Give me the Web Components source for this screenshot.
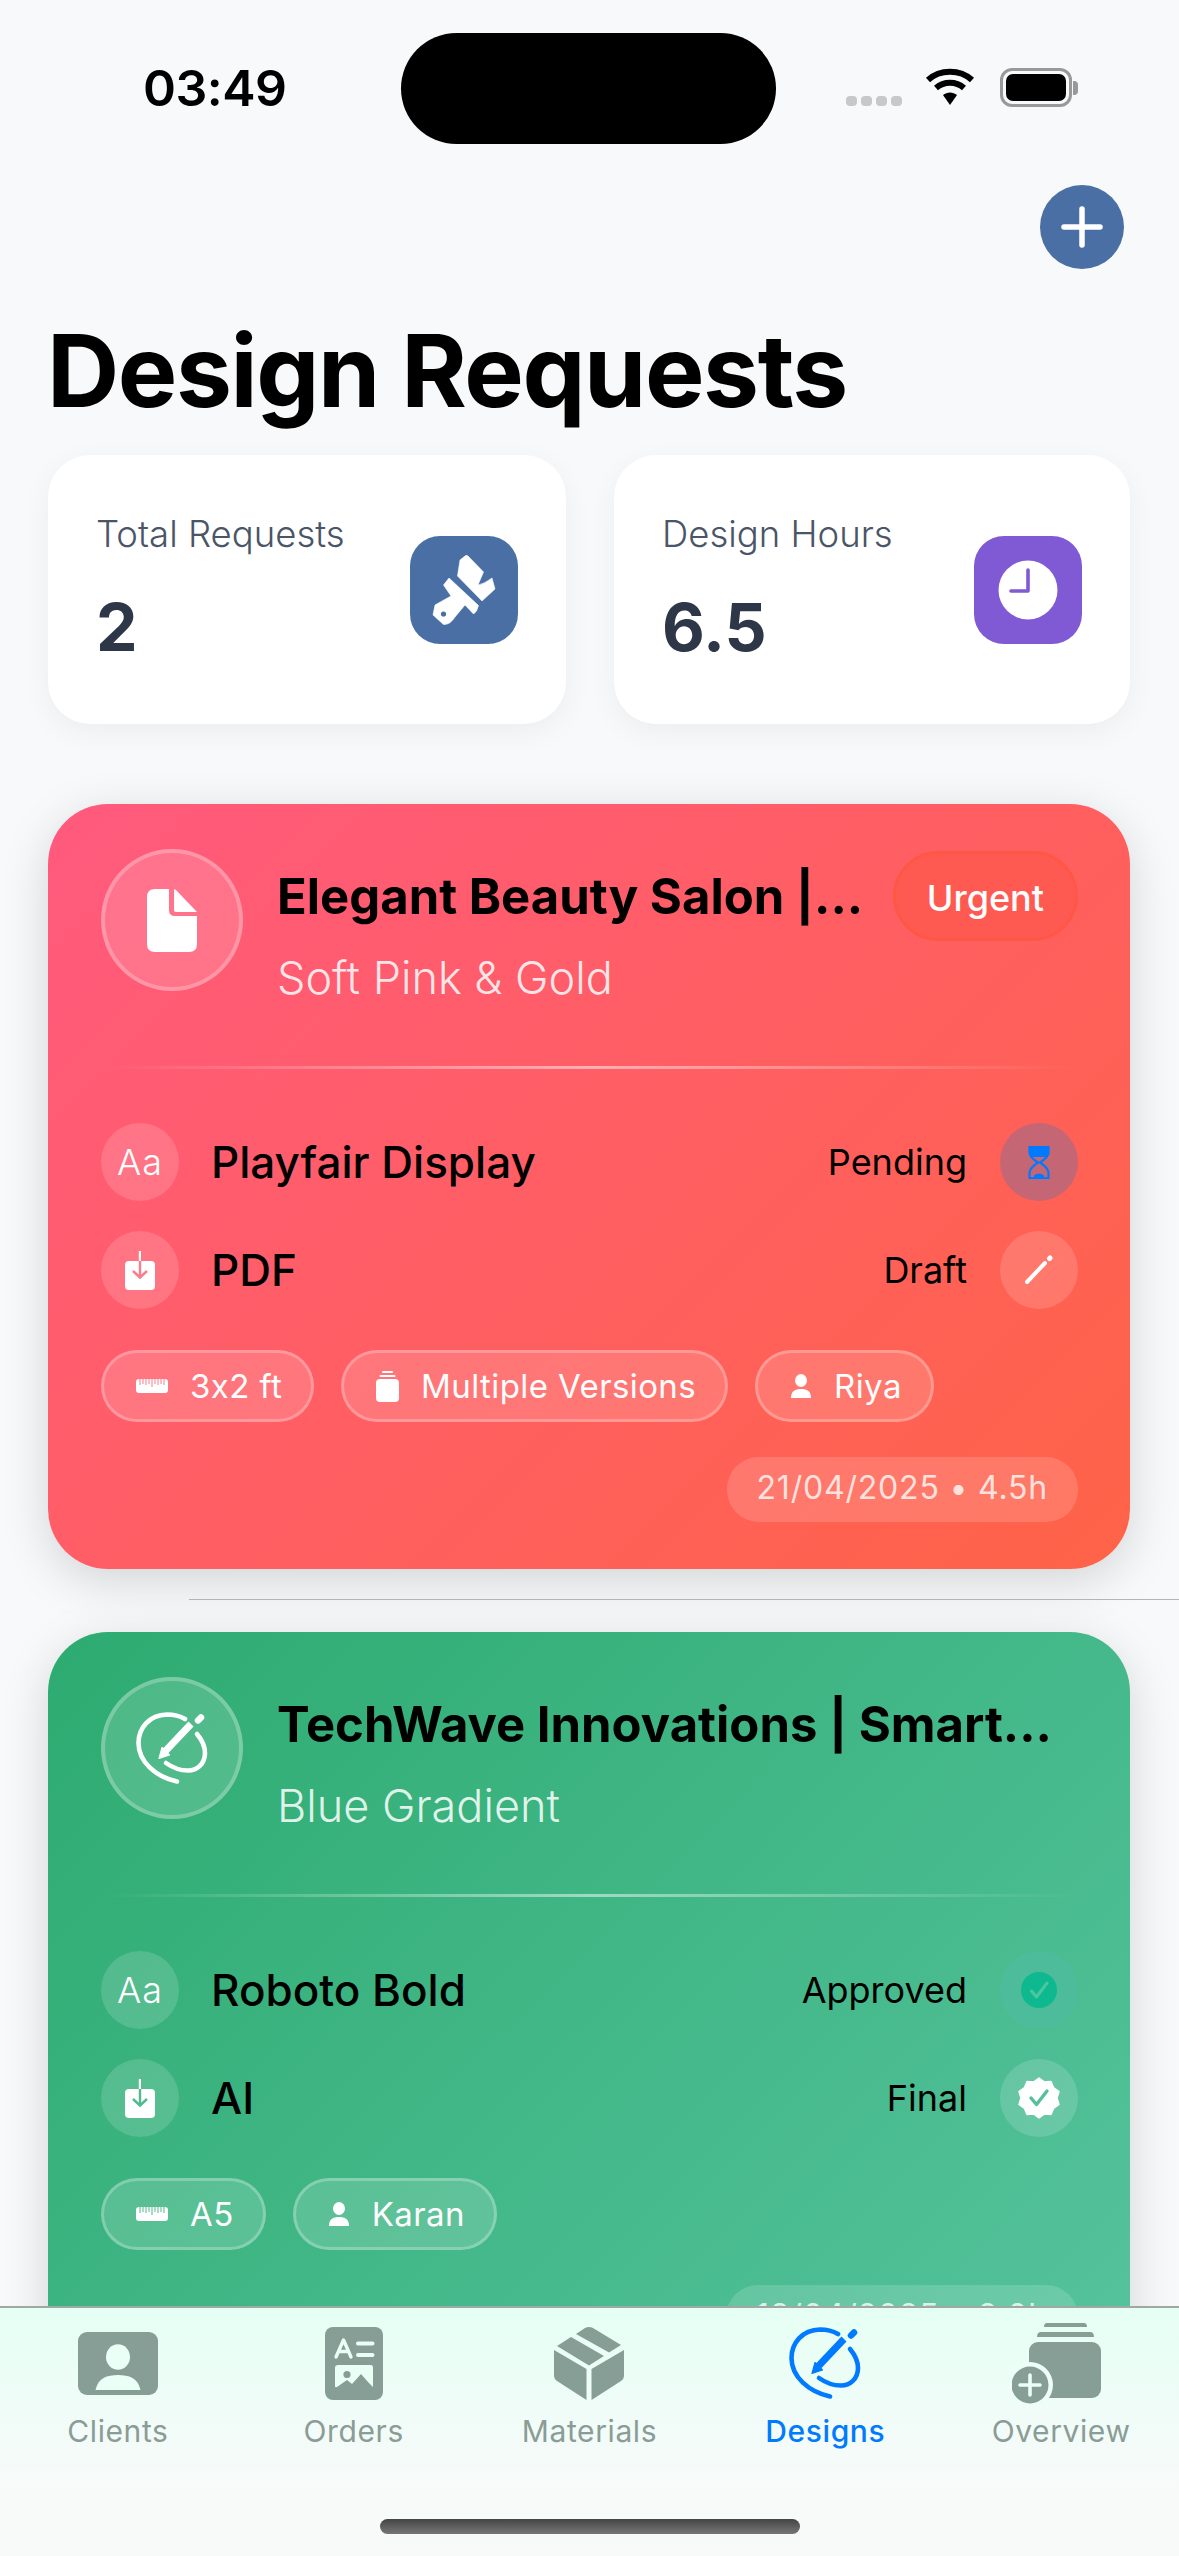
<!DOCTYPE html>
<html lang="en">
<head>
<meta charset="utf-8">
<title>Design Requests</title>
<style>
  html, body { margin: 0; padding: 0; background: #f8f9fa; }
  body { font-family: Inter, "Liberation Sans", sans-serif; }
</style>
</head>
<body>
<app-shell>
  <status-bar time="03:49"></status-bar>
  <page-header heading="Design Requests"></page-header>
  <stat-row>
    <stat-card label="Total Requests" value="2" icon="tools" tone="#4a6fa5"></stat-card>
    <stat-card label="Design Hours" value="6.5" icon="clock" tone="#805ad5"></stat-card>
  </stat-row>
  <request-list>
    <design-card heading="Elegant Beauty Salon |..." sub="Soft Pink &amp; Gold" icon="document" badge="Urgent"
      date="21/04/2025 • 4.5h" from="#ff5a7e" to="#ff6347" cut="#ff7a8c">
      <info-row lead="Aa" status="Pending" status-icon="pending">Playfair Display</info-row>
      <info-row lead-icon="download" status="Draft" status-icon="pencil">PDF</info-row>
      <chip-tag slot="chips" icon="ruler">3x2 ft</chip-tag>
      <chip-tag slot="chips" icon="albums">Multiple Versions</chip-tag>
      <chip-tag slot="chips" icon="person">Riya</chip-tag>
    </design-card>
    <list-sep></list-sep>
    <design-card heading="TechWave Innovations | Smart..." sub="Blue Gradient" icon="penCircle"
      date="18/04/2025 • 2.0h" from="#2dab70" to="#56c39e" cut="#4fbb8f">
      <info-row lead="Aa" status="Approved" status-icon="approved">Roboto Bold</info-row>
      <info-row lead-icon="download" status="Final" status-icon="seal">AI</info-row>
      <chip-tag slot="chips" icon="ruler">A5</chip-tag>
      <chip-tag slot="chips" icon="person">Karan</chip-tag>
    </design-card>
  </request-list>
  <tab-bar>
    <tab-item icon="client">Clients</tab-item>
    <tab-item icon="orders">Orders</tab-item>
    <tab-item icon="cube">Materials</tab-item>
    <tab-item icon="penCircle" active>Designs</tab-item>
    <tab-item icon="overview">Overview</tab-item>
  </tab-bar>
</app-shell>

<script>
const ICONS = {
  tools: `<svg width="64" height="70" viewBox="0 0 64 70" fill="#fff" stroke="#fff" stroke-width=".6" stroke-linejoin="round">
    <path d="M33 1 Q34.5 -.5 36 1 L51.5 17 L46 30 Q52 29 60 23 L63 34 L50 46 L25.5 21 L28 5 Z"/>
    <path d="M11.5 30 L17 23 L46.5 50.5 Q45 57 41.5 59 L33 50 L23 62 Q18 70 11.5 69.5 L1 60 L3 50 L19 41 Z"/>
    <circle cx="11.5" cy="59" r="2.6" fill="#4a6fa5" stroke="none"/></svg>`,
  clock: `<svg width="60" height="60" viewBox="0 0 60 60"><circle cx="30" cy="30" r="29.5" fill="#fff"/>
    <path d="M30 10 V31 H13" fill="none" stroke="#805ad5" stroke-width="3.6" stroke-linejoin="round" stroke-linecap="round"/></svg>`,
  document: `<svg width="50" height="63" viewBox="0 0 50 63" fill="#fff">
    <path d="M8 0 H22 V21 Q22 27 28 27 H50 V55 Q50 63 42 63 H8 Q0 63 0 55 V8 Q0 0 8 0 Z"/>
    <path d="M27 0 Q27 0 29 1 L50 23 H29 Q27 23 27 21 Z"/></svg>`,
  penCircle: `<svg width="72" height="72" viewBox="0 0 72 72" fill="none" stroke="currentColor" stroke-linecap="round">
    <path d="M49 7 C43 3.5 36 2.5 31 2.5 C13 3 2.5 16 2.5 31 C2.5 50 20 65 41 69.5" stroke-width="4.6"/>
    <path d="M61 22 C66 28 69 34 69 41 C69 52 61 58.5 52 58.5 C45 58.5 37 56 30 51" stroke-width="4.6"/>
    <path d="M29 39.5 L55 12" stroke-width="7" stroke-linecap="butt"/>
    <path d="M62 8.5 L65 5.5" stroke-width="6.5"/>
    <path d="M23 46.5 L26 35.5 L33.5 43 Z" fill="currentColor" stroke="currentColor" stroke-width="1.2" stroke-linejoin="round"/></svg>`,
  download: `<svg width="32" height="39" viewBox="0 0 32 39">
    <path d="M14.8 0 H17 V11 H14.8 Z" fill="#fff"/>
    <rect x="1" y="10" width="30" height="29" rx="4" fill="#fff"/>
    <path d="M16 10 V25 M9 20 L16 26.5 L23 20" fill="none" stroke="var(--cut)" stroke-width="2.4"/></svg>`,
  pending: `<svg width="22" height="33" viewBox="0 0 22 33">
    <path d="M1.5 1 H20.5 V7 Q20.5 11 12 16.5 Q20.5 22 20.5 27 V32 H1.5 V27 Q1.5 22 10 16.5 Q1.5 11 1.5 7 Z" fill="none" stroke="#007aff" stroke-width="2.2"/>
    <path d="M1.5 1 H20.5 V7 Q20.5 9 18 11 H4 Q1.5 9 1.5 7 Z M6 29.5 Q11 25.5 16 29.5 V31 H6 Z" fill="#007aff"/></svg>`,
  pencil: `<svg width="30" height="30" viewBox="0 0 30 30" fill="none" stroke="#fff" stroke-linecap="round">
    <path d="M3 27 L21 8" stroke-width="4"/><path d="M25.5 3.5 L26 3" stroke-width="5"/></svg>`,
  approved: `<svg width="36" height="36" viewBox="0 0 36 36"><circle cx="18" cy="18" r="18" fill="#0eb98f"/>
    <path d="M10.5 19 L15.5 25 L26 11" fill="none" stroke="#4cc6a1" stroke-width="3" stroke-linecap="round" stroke-linejoin="round"/></svg>`,
  seal: `<svg width="42" height="42" viewBox="0 0 42 42">
    <path d="M21 1 L26.5 5 L33 4.5 L35.5 10.5 L41 14.5 L39 21 L41 27.5 L35.5 31.5 L33 37.5 L26.5 37 L21 41 L15.5 37 L9 37.5 L6.5 31.5 L1 27.5 L3 21 L1 14.5 L6.5 10.5 L9 4.5 L15.5 5 Z" fill="#fff" stroke="#fff" stroke-width="1.5" stroke-linejoin="round"/>
    <path d="M13 21 L18.5 27.5 L29 14" fill="none" stroke="#56c09a" stroke-width="3.4" stroke-linecap="round" stroke-linejoin="round"/></svg>`,
  ruler: `<svg width="32" height="14" viewBox="0 0 32 14">
    <rect width="32" height="14" rx="3" fill="#fff"/>
    <path d="M4 0 V6 M7 0 V5 M10 0 V6 M13 0 V5 M16 0 V8 M19 0 V5 M22 0 V6 M25 0 V5 M28 0 V6" stroke="var(--cut)" stroke-width="1"/></svg>`,
  albums: `<svg width="23" height="31" viewBox="0 0 23 31" fill="#fff">
    <rect x="6" y="0" width="11" height="2" rx="1"/><rect x="3.5" y="4" width="16" height="2" rx="1"/>
    <rect x="0" y="8" width="23" height="23" rx="4"/></svg>`,
  person: `<svg width="22" height="24" viewBox="0 0 22 24" fill="#fff">
    <ellipse cx="11" cy="6.5" rx="6" ry="6.5"/><path d="M1 24 C1 17 5 15 11 15 C17 15 21 17 21 24 Z"/></svg>`,
  client: `<svg width="80" height="63" viewBox="0 0 80 63">
    <rect width="80" height="63" rx="9" fill="currentColor"/>
    <ellipse cx="40" cy="25" rx="12" ry="12.8" fill="#eafff6"/>
    <path d="M17.5 58 C20 46 29 43 40 43 C51 43 60 46 62.5 58 Z" fill="#eafff6"/></svg>`,
  orders: `<svg width="58" height="73" viewBox="0 0 58 73">
    <rect width="58" height="73" rx="8" fill="currentColor"/>
    <path d="M11 30 L18.5 13 L26 30 M13.5 24.5 H23.5" fill="none" stroke="#eafff6" stroke-width="3.4" stroke-linecap="round" stroke-linejoin="round"/>
    <path d="M33 16.5 H47.5 M33 28 H47.5" stroke="#eafff6" stroke-width="4" stroke-linecap="round"/>
    <path d="M10 41 Q10 38 13 38 H46 Q48 38 48 41 V60 L43 55 L36 47 L27 57 L22 53 L12 60 L10 60 Z" fill="#eafff6"/>
    <circle cx="22" cy="47.5" r="3.6" fill="currentColor"/></svg>`,
  cube: `<svg width="70" height="74" viewBox="0 0 70 74" fill="currentColor">
    <path d="M0 24 L32.5 43 V74 L3 55 Q0 53 0 50 Z"/>
    <path d="M70 24 L37.5 43 V74 L67 55 Q70 53 70 50 Z"/>
    <path d="M3 20 L17 11 L50 30 L35 39.5 Z"/>
    <path d="M22 8 L31 2 Q35 0 39 2 L67 19 L55 26.5 Z"/></svg>`,
  overview: `<svg width="98" height="82" viewBox="0 0 98 82">
    <path d="M32 5 Q32 1 35 1 H72 Q75 1 75 5 Z" fill="currentColor"/>
    <path d="M25 15 Q25 10 29 10 H78 Q82 10 82 15 Z" fill="currentColor"/>
    <rect x="17" y="20" width="72" height="56" rx="9" fill="currentColor"/>
    <circle cx="18" cy="63" r="23" fill="#edfdf8"/>
    <circle cx="18" cy="63" r="18.5" fill="currentColor"/>
    <path d="M18 53 V73 M8 63 H28" stroke="#edfdf8" stroke-width="3.6" stroke-linecap="round"/></svg>`
};

class AppShell extends HTMLElement {
  constructor() {
    super();
    this.attachShadow({ mode: 'open' });
    this.shadowRoot.innerHTML = `
      <style>
        :host { display: flex; flex-direction: column; height: 2556px; width: 1179px; overflow: hidden; background: #f8f9fa; color: #000; }
      </style>
      <slot></slot>`;
  }
}

class StatusBar extends HTMLElement {
  constructor() {
    super();
    this.attachShadow({ mode: 'open' });
    this.shadowRoot.innerHTML = `
      <style>
        :host { display: flex; align-items: flex-start; height: 175px; flex: none; padding: 33px 95px 0 143px; box-sizing: border-box; }
        .time { width: 258px; font: 600 50px/110px Inter, sans-serif; letter-spacing: -0.5px; }
        .island { width: 375px; height: 111px; border-radius: 56px; background: #000; }
        .right { flex: 1; display: flex; align-items: flex-start; padding: 35px 0 0 70px; }
        .dots { display: flex; gap: 4px; margin: 28px 23px 0 0; }
        .dots i { width: 11px; height: 10px; border-radius: 4px; background: #c8c8c8; }
        .batt { display: flex; align-items: center; margin-left: 25px; height: 39px; }
        .shell { width: 72px; height: 39px; box-sizing: border-box; border: 3px solid #999; border-radius: 12px; padding: 3px; }
        .shell i { display: block; height: 100%; border-radius: 7px; background: #000; }
        .nub { width: 5px; height: 14px; background: #999; border-radius: 0 4px 4px 0; margin-left: 1px; }
      </style>
      <div class="time">${this.getAttribute('time')}</div>
      <div class="island"></div>
      <div class="right">
        <div class="dots"><i></i><i></i><i></i><i></i></div>
        <svg width="50" height="37" viewBox="0 0 50 37" fill="none" stroke="#000" stroke-width="6">
          <path d="M3 12 C15 1 35 1 47 12"/><path d="M11 20 C19 13 31 13 39 20"/>
          <path d="M18 27 L25 37 L32 27 C28 23.5 22 23.5 18 27 Z" fill="#000" stroke="none"/>
        </svg>
        <div class="batt"><div class="shell"><i></i></div><div class="nub"></div></div>
      </div>`;
  }
}

class PageHeader extends HTMLElement {
  constructor() {
    super();
    this.attachShadow({ mode: 'open' });
    this.shadowRoot.innerHTML = `
      <style>
        :host { display: block; flex: none; padding: 10px 55px 0 47px; }
        .top { display: flex; justify-content: flex-end; }
        .add { width: 84px; height: 84px; border-radius: 50%; background: #4a6fa5; display: flex; align-items: center; justify-content: center; }
        h1 { margin: 40px 0 0; font: 700 100px/124px Inter, sans-serif; letter-spacing: -1.4px; color: #000; white-space: nowrap; }
      </style>
      <div class="top">
        <div class="add">
          <svg width="42" height="42" viewBox="0 0 42 42"><path d="M21 3 V39 M3 21 H39" stroke="#fff" stroke-width="5.5" stroke-linecap="round"/></svg>
        </div>
      </div>
      <h1>${this.getAttribute('heading')}</h1>`;
  }
}

class StatRow extends HTMLElement {
  constructor() {
    super();
    this.attachShadow({ mode: 'open' });
    this.shadowRoot.innerHTML = `
      <style>
        :host { display: grid; flex: none; grid-template-columns: 518px 516px; gap: 48px; padding: 22px 49px 0 48px; }
      </style>
      <slot></slot>`;
  }
}

class StatCard extends HTMLElement {
  constructor() {
    super();
    this.attachShadow({ mode: 'open' });
    this.shadowRoot.innerHTML = `
      <style>
        :host { display: flex; align-items: center; justify-content: space-between; height: 269px; box-sizing: border-box; padding: 0 48px; background: #fff; border-radius: 42px; box-shadow: 0 8px 30px rgba(0,0,0,.05); }
        .label { font: 350 36.5px/44px Inter, sans-serif; color: #4a5568; margin-bottom: 31px; }
        .value { font: 700 66px/80px Inter, sans-serif; color: #2d3748; }
        .icon { width: 108px; height: 108px; border-radius: 30px; display: flex; align-items: center; justify-content: center; background: ${this.getAttribute('tone')}; }
      </style>
      <div class="text">
        <div class="label">${this.getAttribute('label')}</div>
        <div class="value">${this.getAttribute('value')}</div>
      </div>
      <div class="icon">${ICONS[this.getAttribute('icon')]}</div>`;
  }
}

class RequestList extends HTMLElement {
  constructor() {
    super();
    this.attachShadow({ mode: 'open' });
    this.shadowRoot.innerHTML = `
      <style>
        :host { display: block; flex: 1; min-height: 0; overflow: hidden; padding: 80px 49px 0 48px; }
      </style>
      <slot></slot>`;
  }
}

class ListSep extends HTMLElement {
  constructor() {
    super();
    this.attachShadow({ mode: 'open' });
    this.shadowRoot.innerHTML = `
      <style>
        :host { display: block; height: 1px; margin: 30px -49px 32px 141px; background: #b4b5b8; }
      </style>`;
  }
}

class DesignCard extends HTMLElement {
  constructor() {
    super();
    this.attachShadow({ mode: 'open' });
    const badge = this.getAttribute('badge');
    this.shadowRoot.innerHTML = `
      <style>
        :host { display: block; box-sizing: border-box; height: 765px; padding: 45px 52px 47px 53px; border-radius: 60px; color: #fff;
          --cut: ${this.getAttribute('cut')};
          background: linear-gradient(135deg, ${this.getAttribute('from')}, ${this.getAttribute('to')});
          box-shadow: 0 12px 48px rgba(0,0,0,.15); }
        .head { display: flex; align-items: flex-start; height: 173px; }
        .circle { flex: none; width: 142px; height: 142px; box-sizing: border-box; border-radius: 50%; background: rgba(255,255,255,.15); border: 4px solid rgba(255,255,255,.25); display: flex; align-items: center; justify-content: center; color: #fff; }
        .titles { flex: 1; min-width: 0; margin-left: 34px; padding-top: 19px; }
        .title { font: 700 49px/58px Inter, sans-serif; color: #000; white-space: nowrap; }
        .sub { font: 300 45px/54px Inter, sans-serif; color: rgba(255,255,255,.85); margin-top: 25px; white-space: nowrap; }
        .badge { flex: none; height: 90px; box-sizing: border-box; padding: 0 31px; margin-top: 2px; border-radius: 45px; border: 3px solid #ff5746; background: #ff5a52; font: 500 36px/89px Inter, sans-serif; color: #fff; }
        .rule { height: 3px; margin-top: 44px; margin-bottom: 54px; background: linear-gradient(90deg, rgba(255,255,255,0), rgba(255,255,255,.5) 50%, rgba(255,255,255,0)); }
        .rows { display: flex; flex-direction: column; gap: 30px; }
        .chips { display: flex; gap: 27px; margin-top: 41px; }
        .foot { display: flex; justify-content: flex-end; margin-top: 35px; }
        .date { height: 65px; padding: 0 30px; border-radius: 32px; background: rgba(255,255,255,.15); font: 400 32px/62px Inter, sans-serif; letter-spacing: .8px; color: rgba(255,255,255,.8); }
      </style>
      <div class="head">
        <div class="circle">${ICONS[this.getAttribute('icon')]}</div>
        <div class="titles">
          <div class="title">${this.getAttribute('heading')}</div>
          <div class="sub">${this.getAttribute('sub').replace('&', '&amp;')}</div>
        </div>
        ${badge ? `<div class="badge">${badge}</div>` : ''}
      </div>
      <div class="rule"></div>
      <div class="rows"><slot></slot></div>
      <div class="chips"><slot name="chips"></slot></div>
      <div class="foot"><div class="date">${this.getAttribute('date')}</div></div>`;
  }
}

class InfoRow extends HTMLElement {
  constructor() {
    super();
    this.attachShadow({ mode: 'open' });
    const lead = this.getAttribute('lead');
    const kind = this.getAttribute('status-icon');
    const tint = { pending: '#c56674', approved: '#4cbc9a' }[kind] || 'rgba(255,255,255,.15)';
    this.shadowRoot.innerHTML = `
      <style>
        :host { display: flex; align-items: center; height: 78px; }
        .dot { flex: none; width: 78px; height: 78px; border-radius: 50%; display: flex; align-items: center; justify-content: center; background: rgba(255,255,255,.15); }
        .aa { font: 300 36px/78px Inter, sans-serif; letter-spacing: 1px; color: #fff; }
        .name { flex: 1; margin-left: 32px; font: 450 44px/54px Inter, sans-serif; color: #000; white-space: nowrap; }
        .state { font: 400 36px/44px Inter, sans-serif; color: #000; margin-right: 33px; }
        .end { background: ${tint}; }
      </style>
      <div class="dot">${lead ? `<span class="aa">${lead}</span>` : ICONS[this.getAttribute('lead-icon')]}</div>
      <div class="name"><slot></slot></div>
      <div class="state">${this.getAttribute('status')}</div>
      <div class="dot end">${ICONS[kind]}</div>`;
  }
}

class ChipTag extends HTMLElement {
  constructor() {
    super();
    this.attachShadow({ mode: 'open' });
    this.shadowRoot.innerHTML = `
      <style>
        :host { display: flex; align-items: center; gap: 22px; height: 72px; box-sizing: border-box; padding: 0 29px 0 32px; border-radius: 36px; background: rgba(255,255,255,.15); border: 3px solid rgba(255,255,255,.25); font: 400 33px/40px Inter, sans-serif; letter-spacing: .4px; color: #fff; white-space: nowrap; }
        svg { display: block; }
      </style>
      ${ICONS[this.getAttribute('icon')]}<slot></slot>`;
  }
}

class TabBar extends HTMLElement {
  constructor() {
    super();
    this.attachShadow({ mode: 'open' });
    this.shadowRoot.innerHTML = `
      <style>
        :host { display: block; flex: none; height: 250px; box-sizing: border-box; border-top: 2px solid rgba(50,70,60,.45); background: linear-gradient(180deg, #e5fff4, #f8fafa 72%); }
        .tabs { display: grid; grid-template-columns: repeat(5, 1fr); height: 148px; }
        .home { width: 420px; height: 15px; margin: 63px auto 0; border-radius: 8px; background: linear-gradient(180deg, #444, #777); }
      </style>
      <div class="tabs"><slot></slot></div>
      <div class="home"></div>`;
  }
}

class TabItem extends HTMLElement {
  constructor() {
    super();
    this.attachShadow({ mode: 'open' });
    const active = this.hasAttribute('active');
    this.shadowRoot.innerHTML = `
      <style>
        :host { display: flex; flex-direction: column; align-items: center; color: ${active ? '#007aff' : '#869e95'}; }
        .icon { height: 84px; margin-top: 13px; display: flex; align-items: center; justify-content: center; }
        .label { font: ${active ? 500 : 400} 30px/36px Inter, sans-serif; letter-spacing: .6px; margin-top: 8px; color: ${active ? '#007aff' : '#8a9c96'}; }
      </style>
      <div class="icon">${ICONS[this.getAttribute('icon')]}</div>
      <div class="label"><slot></slot></div>`;
  }
}

customElements.define('app-shell', AppShell);
customElements.define('status-bar', StatusBar);
customElements.define('page-header', PageHeader);
customElements.define('stat-row', StatRow);
customElements.define('stat-card', StatCard);
customElements.define('request-list', RequestList);
customElements.define('list-sep', ListSep);
customElements.define('design-card', DesignCard);
customElements.define('info-row', InfoRow);
customElements.define('chip-tag', ChipTag);
customElements.define('tab-bar', TabBar);
customElements.define('tab-item', TabItem);
</script>
</body>
</html>
